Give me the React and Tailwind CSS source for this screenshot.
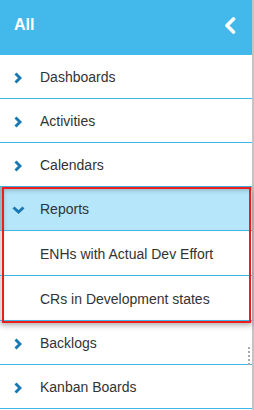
const ITEMS_TOP = ['Dashboards', 'Activities', 'Calendars'];
const ITEMS_BOTTOM = ['Backlogs', 'Kanban Boards'];
const REPORTS = ['ENHs with Actual Dev Effort', 'CRs in Development states'];

function ChevronRight() {
  return (
    <svg width="8" height="12" viewBox="0 0 8 12" className="shrink-0">
      <polyline points="1.5,1.5 6,6 1.5,10.5" fill="none" stroke="#1b78b3" strokeWidth="2.9" />
    </svg>
  );
}

function ChevronDown() {
  return (
    <svg width="13" height="8" viewBox="0 0 13 8" className="shrink-0">
      <polyline points="1.5,1.5 6.5,6 11.5,1.5" fill="none" stroke="#1b78b3" strokeWidth="2.9" />
    </svg>
  );
}

function Row({ label }) {
  return (
    <div className="h-[44px] flex items-center border-b border-[#3fb6e8] pl-[14px] pt-[2px]">
      <div className="w-[26px]">
        <ChevronRight />
      </div>
      <span className="text-[14px] text-[#333]">{label}</span>
    </div>
  );
}

export default function App() {
  return (
    <div className="flex w-[254px] h-[410px] bg-white overflow-hidden" style={{ fontFamily: '"Liberation Sans", Arial, sans-serif' }}>
      <div className="relative w-[252px] flex flex-col">
        <div className="h-[55px] bg-[#42b9ea] flex items-start justify-between pl-[14px] pr-[16px] pt-[13px]">
          <span className="text-white font-bold text-[16px]">All</span>
          <svg width="12" height="17" viewBox="0 0 12 17" className="mt-[4px]">
            <polyline points="9.5,2 3,8.5 9.5,15" fill="none" stroke="#fff" strokeWidth="3.6" strokeLinecap="round" strokeLinejoin="round" />
          </svg>
        </div>

        {ITEMS_TOP.map((t) => <Row key={t} label={t} />)}

        <div className="relative z-10 bg-white shadow-[0_4px_6px_rgba(0,0,0,0.35)]">
          <div className="h-[44px] flex items-center border-b border-[#3fb6e8] pl-[12px] pt-[2px] bg-[#b5e6fa] shadow-[inset_4px_4px_5px_-1px_rgba(0,0,0,0.25)]">
            <div className="w-[28px]">
              <ChevronDown />
            </div>
            <span className="text-[14px] text-[#333]">Reports</span>
          </div>
          {REPORTS.map((t) => (
            <div key={t} className="h-[45px] flex items-center border-b border-[#3fb6e8] pl-[40px] pt-[2px] shadow-[inset_5px_0_5px_-3px_rgba(0,0,0,0.2)]">
              <span className="text-[14px] text-[#333]">{t}</span>
            </div>
          ))}
          <div className="absolute top-[0px] left-[2px] right-[1px] bottom-[-2px] border-[2.5px] border-[#ee1c1c] pointer-events-none" />
        </div>

        {ITEMS_BOTTOM.map((t) => <Row key={t} label={t} />)}

        <div className="absolute left-[248px] top-[347px] flex flex-col gap-[2px]">
          {[0, 1, 2, 3, 4].map((i) => (
            <div key={i} className="w-[2px] h-[2px] bg-[#aaa]" />
          ))}
        </div>
      </div>
      <div className="w-[2px] bg-[#c4c4c4]" />
    </div>
  );
}
